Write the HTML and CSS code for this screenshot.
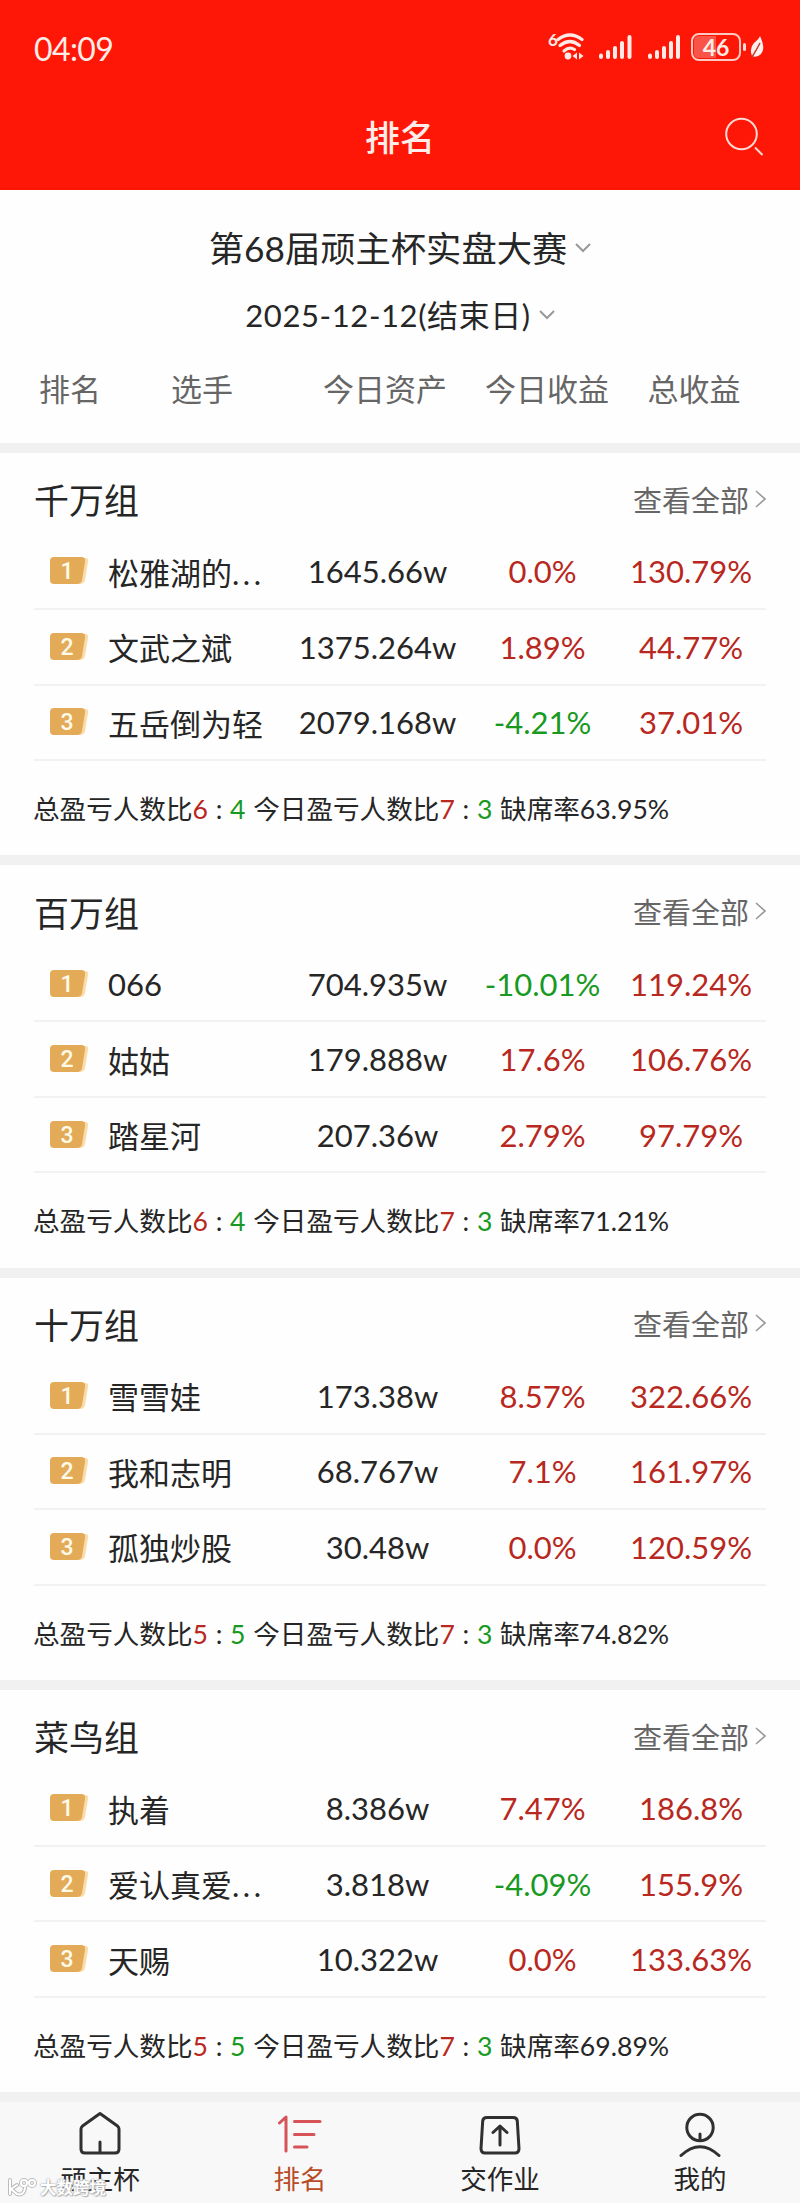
FILE: index.html
```html
<!DOCTYPE html>
<html lang="zh-CN">
<head>
  <meta charset="UTF-8">
  <meta name="viewport" content="width=device-width, initial-scale=1.0">
  <title>排名</title>
  <link rel="stylesheet" href="styles.css">
</head>
<body>
  <header class="header">
    <div class="status">
      <span class="time">04:09</span>
      <svg class="status-icons" width="220" height="32" viewBox="0 0 220 32">
        <text class="wifi-gen" x="0" y="16">6</text>
        <g fill="none" stroke="#ffeae6" stroke-width="3.2" stroke-linecap="round">
          <path d="M10 9.500Q22 0.500 34 9.500"/>
          <path d="M12 15.500Q22 7.500 31.500 15.500"/>
          <path d="M16 21Q21.500 16 26.500 19.500"/>
        </g>
        <circle cx="20" cy="26" r="3.400" fill="#ffeae6"/>
        <path d="M29 22.500v7l-4.500-3.500zM31 22.500v7l4.500-3.500z" fill="#ffeae6"/>
        <g stroke="#ffeae6" stroke-width="4" stroke-linecap="round">
          <path d="M53 25.500v1.500M60 22v5M67 18v9M74 13v14M81.500 7v20"/>
          <path d="M102 25.500v1.500M109 22v5M116 18v9M123 13v14M130 7v20"/>
        </g>
        <rect x="144" y="4" width="48" height="26" rx="7" fill="none" stroke="#ffc8c0" stroke-width="2"/>
        <path d="M151 6H168V28H151Q146 28 146 23V11Q146 6 151 6Z" fill="#fa5348"/>
        <text class="battery" x="168" y="25.500">46</text>
        <rect x="195" y="13" width="3" height="8" rx="1.500" fill="#ffd8d0"/>
        <path d="M212 6Q218 19 213 24Q209 28 204 26Q201 18 206 13Q211 9 212 6Z" fill="#fff0ee"/>
        <path d="M212 13Q209 19 204 27" fill="none" stroke="#c43a2c" stroke-width="1.500"/>
      </svg>
    </div>
    <div class="navbar">
      <h1 class="page-title">排名</h1>
      <svg class="search" width="40" height="40" viewBox="0 0 40 40" fill="none" stroke="#ffd9d2" stroke-width="2">
        <circle cx="17.500" cy="17" r="15.300"/>
        <path d="M31 30.500l7.500 7.500"/>
      </svg>
    </div>
  </header>

  <div class="filters">
    <div class="contest">第68届顽主杯实盘大赛
      <svg class="arrow-down" width="16" height="10" viewBox="0 0 16 10"><path d="M1 1l7 7 7-7"/></svg>
    </div>
    <div class="date">2025-12-12(结束日)
      <svg class="arrow-down" width="16" height="10" viewBox="0 0 16 10"><path d="M1 1l7 7 7-7"/></svg>
    </div>
    <div class="columns">
      <span>排名</span>
      <span>选手</span>
      <span>今日资产</span>
      <span>今日收益</span>
      <span>总收益</span>
    </div>
  </div>

  <main class="groups"></main>

  <nav class="tabbar">
    <div class="tab">
      <svg width="44" height="48" viewBox="0 0 44 48">
        <path d="M22 4.500L39.500 17Q41 18.500 41 20V40Q41 44 37 44H7Q3 44 3 40V20Q3 18.500 4.500 17ZM22 33V43"/>
      </svg>
      <span>顽主杯</span>
    </div>
    <div class="tab active">
      <svg width="44" height="48" viewBox="0 0 44 48">
        <path d="M1.500 14L8 8V42M16.500 12.500H42M16.500 25.500H36M16.500 38H29"/>
      </svg>
      <span>排名</span>
    </div>
    <div class="tab">
      <svg width="44" height="48" viewBox="0 0 44 48">
        <path d="M9 8.500H35Q39 8.500 39.300 12L41 39.500Q41 44 37 44H7Q3 44 3 39.500L4.700 12Q5 8.500 9 8.500ZM22 36V17M15 23.500L22 17L29 23.500"/>
      </svg>
      <span>交作业</span>
    </div>
    <div class="tab">
      <svg width="44" height="48" viewBox="0 0 44 48">
        <circle cx="22" cy="18.500" r="13.200"/>
        <path d="M22 25V31M3 46.500Q22 29 41 46.500"/>
      </svg>
      <span>我的</span>
    </div>
    <div class="watermark">
      <svg width="30" height="20" viewBox="0 0 30 20">
        <path class="mark-edge" d="M3 2V16M10 7L4 11L10 16Q17 18 18 10"/>
        <circle class="mark-edge" cx="17" cy="5" r="3"/>
        <circle class="mark-edge" cx="25" cy="5" r="3"/>
        <path class="mark-fill" d="M3 2V16M10 7L4 11L10 16Q17 18 18 10"/>
        <circle class="mark-fill" cx="17" cy="5" r="3"/>
        <circle class="mark-fill" cx="25" cy="5" r="3"/>
      </svg>
      <span>大数跨境</span>
    </div>
  </nav>

  <script src="script.js"></script>
</body>
</html>
```

FILE: styles.css
```css
* {
  box-sizing: border-box;
}
body {
  margin: 0;
  width: 800px;
  height: 2203px;
  overflow: hidden;
  background-color: #fefefe;
  color: #262626;
  font-family: Lato, "Noto Sans CJK SC", sans-serif;
  font-size: 31px;
}
.header {
  height: 190px;
  background-color: #fe1706;
  color: #ffece8;
}
.status {
  display: flex;
  justify-content: space-between;
  height: 96px;
  padding: 30px 32px 0 34px;
}
.time {
  font-size: 32px;
  line-height: 37px;
  letter-spacing: -0.6px;
}
.status-icons {
  display: block;
}
.wifi-gen {
  font-size: 17px;
  font-weight: 700;
  fill: #ffece8;
}
.battery {
  font-size: 23px;
  font-weight: 700;
  text-anchor: middle;
  fill: #ffece8;
}
.navbar {
  display: grid;
  grid-template-columns: 1fr auto 1fr;
  padding: 20px 36px 0;
}
.page-title {
  grid-column: 2;
  margin: 0;
  font-size: 35px;
  font-weight: 500;
  line-height: 42px;
}
.search {
  justify-self: end;
  margin-top: 1px;
}
.filters {
  height: 253px;
  padding-top: 31px;
}
.contest,
.date {
  display: flex;
  justify-content: center;
  align-items: center;
  gap: 8px;
}
.contest {
  height: 50px;
  font-size: 35.300px;
}
.date {
  height: 50px;
  margin-top: 17px;
  letter-spacing: 0.6px;
}
.arrow-down {
  margin-top: 4px;
  fill: none;
  stroke: #999;
  stroke-width: 2;
}
.columns {
  display: grid;
  grid-template-columns: 70px 194px 172px 152px 142px;
  height: 44px;
  margin-top: 29px;
  padding-left: 35px;
  line-height: 44px;
  text-align: center;
  color: #666;
}
.group {
  height: 412.250px;
  padding: 10px 34px 0;
  border-top: 10px solid #f1f1f1;
}
.group-head {
  display: flex;
  justify-content: space-between;
  align-items: center;
  height: 71.500px;
}
.group-name {
  margin: 0;
  font-size: 35px;
  font-weight: 400;
}
.more {
  display: flex;
  align-items: center;
  gap: 6px;
  font-size: 29px;
  color: #666;
}
.arrow-right {
  fill: none;
  stroke: #999;
  stroke-width: 1.600;
}
.row {
  display: grid;
  grid-template-columns: 74px 184px 171px 159px 138px;
  align-items: center;
  height: 75.500px;
  border-bottom: 2px solid #f2f2f2;
  text-align: center;
}
.badge {
  display: block;
  margin-left: 15px;
}
.badge-num {
  font-family: Roboto, sans-serif;
  font-size: 23px;
  font-weight: 500;
  text-anchor: middle;
  fill: #fffbe8;
}
.player {
  text-align: left;
}
.dots {
  letter-spacing: 3.500px;
}
.up {
  color: #b82820;
}
.down {
  color: #18991f;
}
.summary {
  margin: 0 0 0 -1px;
  padding-top: 28px;
  font-size: 26.600px;
  line-height: 40px;
  white-space: pre;
  word-spacing: 0.9px;
}
.tabbar {
  position: relative;
  display: grid;
  grid-template-columns: repeat(4, 1fr);
  height: 111px;
  border-top: 10px solid #f1f1f1;
  background-color: #f8f8f8;
}
.tab {
  display: flex;
  flex-direction: column;
  align-items: center;
  padding-top: 7px;
  font-size: 26.500px;
  line-height: 36px;
}
.tab svg {
  fill: none;
  stroke: #303030;
  stroke-width: 3;
  stroke-linecap: round;
  stroke-linejoin: round;
}
.tab span {
  margin-top: 4px;
}
.tab.active {
  color: #b84c26;
}
.tab.active svg {
  stroke: #d65358;
}
.watermark {
  position: absolute;
  left: 7px;
  bottom: 4px;
  display: flex;
  align-items: center;
  gap: 3px;
  font-size: 16.500px;
  font-weight: 700;
  line-height: 22px;
  color: #fff;
  text-shadow: 0 0 1px #999, 0 0 2px #aaa, 1px 1px 1px #bbb;
}
.mark-edge,
.mark-fill {
  fill: none;
  stroke-linecap: round;
}
.mark-edge {
  stroke: #bbb;
  stroke-width: 4;
}
.mark-fill {
  stroke: #fff;
  stroke-width: 2;
}
```

FILE: script.js
```js
const groups = [
  {
    name: '千万组',
    players: [
      ['松雅湖的...', '1645.66w', '0.0%', '130.79%'],
      ['文武之斌', '1375.264w', '1.89%', '44.77%'],
      ['五岳倒为轻', '2079.168w', '-4.21%', '37.01%']
    ],
    total: [6, 4],
    today: [7, 3],
    absent: '63.95%'
  },
  {
    name: '百万组',
    players: [
      ['066', '704.935w', '-10.01%', '119.24%'],
      ['姑姑', '179.888w', '17.6%', '106.76%'],
      ['踏星河', '207.36w', '2.79%', '97.79%']
    ],
    total: [6, 4],
    today: [7, 3],
    absent: '71.21%'
  },
  {
    name: '十万组',
    players: [
      ['雪雪娃', '173.38w', '8.57%', '322.66%'],
      ['我和志明', '68.767w', '7.1%', '161.97%'],
      ['孤独炒股', '30.48w', '0.0%', '120.59%']
    ],
    total: [5, 5],
    today: [7, 3],
    absent: '74.82%'
  },
  {
    name: '菜鸟组',
    players: [
      ['执着', '8.386w', '7.47%', '186.8%'],
      ['爱认真爱...', '3.818w', '-4.09%', '155.9%'],
      ['天赐', '10.322w', '0.0%', '133.63%']
    ],
    total: [5, 5],
    today: [7, 3],
    absent: '69.89%'
  }
];

const sign = (value) => value.startsWith('-') ? 'down' : 'up';

const ratio = ([win, lose]) =>
  `<span class="up">${win}</span> : <span class="down">${lose}</span>`;

const badge = (num) => `
  <svg class="badge" width="40" height="28" viewBox="0 0 40 28">
    <path d="M10 1H36Q40 1 39 5L36 23Q35 27 31 27H10Z" fill="#fbdca9"/>
    <path d="M5 0H32Q37 0 36 5L33 23Q32 27 28 27H5Q1 27 1 23V4Q1 0 5 0Z" fill="#e3aa58"/>
    <text class="badge-num" x="18" y="22">${num}</text>
  </svg>`;

const row = ([name, asset, today, total], i) => `
  <div class="row">
    ${badge(i + 1)}
    <span class="player">${name.replace('...', '<span class="dots">...</span>')}</span>
    <span>${asset}</span>
    <span class="${sign(today)}">${today}</span>
    <span class="${sign(total)}">${total}</span>
  </div>`;

document.querySelector('.groups').innerHTML = groups.map((group) => `
  <section class="group">
    <div class="group-head">
      <h2 class="group-name">${group.name}</h2>
      <span class="more">查看全部
        <svg class="arrow-right" width="11" height="18" viewBox="0 0 11 18"><path d="M1 1l9 8-9 8"/></svg>
      </span>
    </div>
    ${group.players.map(row).join('')}
    <p class="summary">总盈亏人数比${ratio(group.total)} 今日盈亏人数比${ratio(group.today)} 缺席率${group.absent}</p>
  </section>`).join('');
```
